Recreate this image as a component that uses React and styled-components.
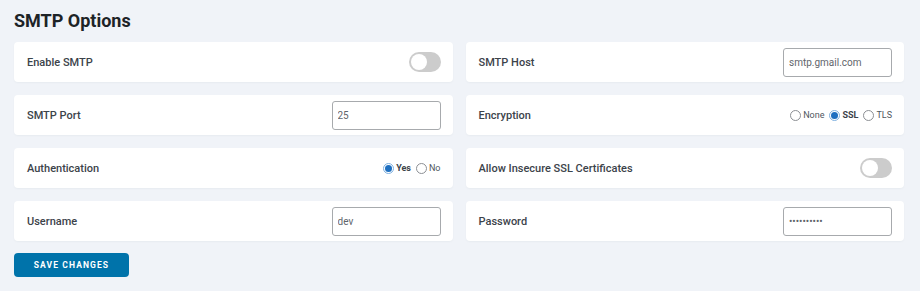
import React from 'react'
import styled, { createGlobalStyle } from 'styled-components'

const GlobalStyle = createGlobalStyle`
  html, body {
    margin: 0;
    padding: 0;
    background: #f0f3f8;
    font-family: Roboto, 'Liberation Sans', sans-serif;
  }
`

const Page = styled.div`
  padding: 9px 16px 14px 14px;
`

const Title = styled.h2`
  margin: 0 0 9px 0;
  font-size: 18px;
  line-height: 24px;
  font-weight: 700;
  color: #1d2327;
`

const Grid = styled.div`
  display: grid;
  grid-template-columns: 1fr 1fr;
  gap: 13px;
`

const Card = styled.div`
  height: 40px;
  box-sizing: border-box;
  padding: 0 12px 0 13px;
  display: flex;
  align-items: center;
  justify-content: space-between;
  background: #fff;
  border-radius: 4px;
  box-shadow: 0 1px 2px rgba(30, 40, 60, 0.04);
`

const Label = styled.span`
  font-size: 11px;
  font-weight: 500;
  color: #3c434a;
`

const TextInput = styled.input`
  width: 109px;
  height: 29px;
  box-sizing: border-box;
  border: 1px solid #a7aaad;
  border-radius: 3px;
  padding: 0 5px;
  font-family: Roboto, 'Liberation Sans', sans-serif;
  font-size: 10px;
  color: #5f656b;
  background: #fff;
  outline: none;
`

const Toggle = styled.span`
  width: 32px;
  height: 20px;
  border-radius: 10px;
  background: ${p => (p.$on ? '#2271b1' : '#cccccc')};
  position: relative;
  display: inline-block;
  &::after {
    content: '';
    position: absolute;
    top: 2px;
    left: ${p => (p.$on ? '14px' : '2px')};
    width: 16px;
    height: 16px;
    border-radius: 50%;
    background: #fff;
  }
`

const RadioGroup = styled.div`
  display: flex;
  align-items: center;
  gap: 5px;
`

const RadioOption = styled.label`
  display: flex;
  align-items: center;
  gap: 2px;
  font-size: 9px;
  font-weight: ${p => (p.$checked ? 700 : 400)};
  color: ${p => (p.$checked ? '#3c434a' : '#50575e')};
`

const Dot = styled.span`
  width: 11px;
  height: 11px;
  box-sizing: border-box;
  border-radius: 50%;
  border: 1px solid ${p => (p.$checked ? '#7fb1e0' : '#8c8f94')};
  background: #fff;
  position: relative;
  &::after {
    content: '';
    display: ${p => (p.$checked ? 'block' : 'none')};
    position: absolute;
    top: 1px;
    left: 1px;
    width: 7px;
    height: 7px;
    border-radius: 50%;
    background: #1e6fc0;
  }
`

const SaveButton = styled.button`
  margin-top: 12px;
  width: 115px;
  height: 24px;
  border: none;
  border-radius: 4px;
  background: #0073aa;
  color: #fff;
  font-family: Roboto, 'Liberation Sans', sans-serif;
  font-size: 8.5px;
  font-weight: 700;
  letter-spacing: 1.1px;
  text-transform: uppercase;
`

const Radios = ({ options, value }) => (
  <RadioGroup>
    {options.map(o => (
      <RadioOption key={o} $checked={o === value}>
        <Dot $checked={o === value} />
        {o}
      </RadioOption>
    ))}
  </RadioGroup>
)

export default function App() {
  return (
    <Page>
      <GlobalStyle />
      <Title>SMTP Options</Title>
      <Grid>
        <Card>
          <Label>Enable SMTP</Label>
          <Toggle />
        </Card>
        <Card>
          <Label>SMTP Host</Label>
          <TextInput defaultValue='smtp.gmail.com' />
        </Card>
        <Card>
          <Label>SMTP Port</Label>
          <TextInput defaultValue='25' />
        </Card>
        <Card>
          <Label>Encryption</Label>
          <Radios options={['None', 'SSL', 'TLS']} value='SSL' />
        </Card>
        <Card>
          <Label>Authentication</Label>
          <Radios options={['Yes', 'No']} value='Yes' />
        </Card>
        <Card>
          <Label>Allow Insecure SSL Certificates</Label>
          <Toggle />
        </Card>
        <Card>
          <Label>Username</Label>
          <TextInput defaultValue='dev' />
        </Card>
        <Card>
          <Label>Password</Label>
          <TextInput type='password' defaultValue='devpass123' />
        </Card>
      </Grid>
      <SaveButton>Save Changes</SaveButton>
    </Page>
  )
}
